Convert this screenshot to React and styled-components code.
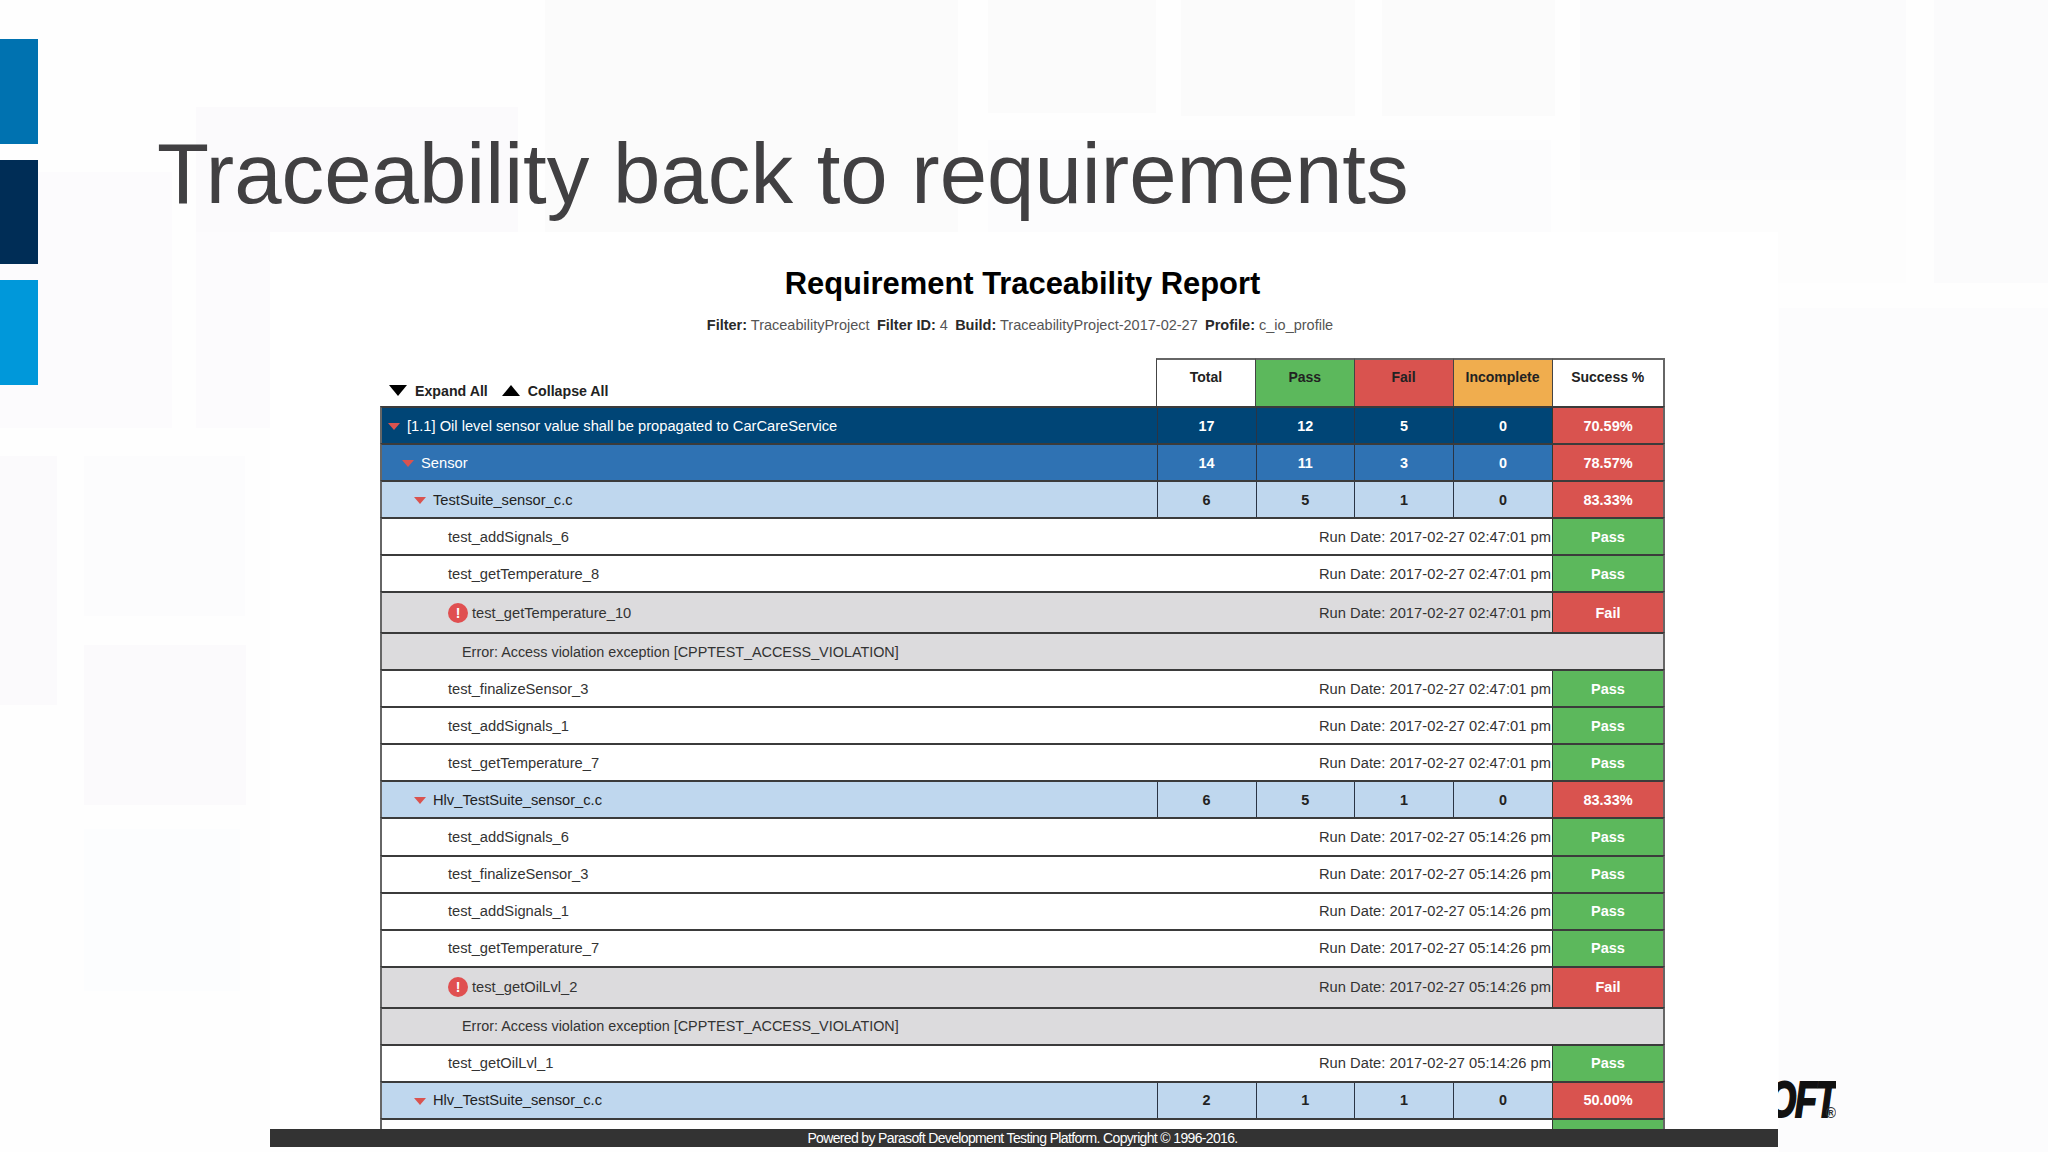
import React from "react";
import styled, { createGlobalStyle } from "styled-components";

const Global = createGlobalStyle`
  html, body { margin: 0; padding: 0; background: #fff; }
  * { box-sizing: border-box; }
  body { font-family: "Liberation Sans", Arial, sans-serif; }
`;

const Slide = styled.div`
  position: relative;
  width: 2048px;
  height: 1152px;
  overflow: hidden;
  background: #fefefe;
  display: flex;
  align-items: flex-start;
`;

const Watermark = styled.svg`
  position: absolute;
  inset: 0;
`;

const Accents = styled.div`
  position: relative;
  flex: none;
  width: 38px;
  padding-top: 39px;
  display: flex;
  flex-direction: column;
  gap: 16px;
`;

const Accent = styled.div`
  height: ${(p) => p.$h}px;
  background: ${(p) => p.$c};
`;

const Main = styled.div`
  position: relative;
  flex: none;
  width: 1740px;
  height: 1147px;
  display: flex;
  flex-direction: column;
`;

const Title = styled.h1`
  flex: none;
  height: 232px;
  margin: 0;
  padding: 125px 0 0 119px;
  font-size: 85.2px;
  line-height: 98px;
  font-weight: 400;
  color: #414042;
  white-space: nowrap;
`;

const Panel = styled.section`
  flex: 1;
  min-height: 0;
  margin-left: 232px;
  width: 1508px;
  background: #fff;
  display: flex;
  flex-direction: column;
`;

const ReportTitle = styled.h2`
  flex: none;
  margin: 0;
  padding: 33px 3px 0 0;
  text-align: center;
  font-size: 30.9px;
  line-height: 38px;
  font-weight: 700;
  color: #000;
`;

const FilterLine = styled.div`
  flex: none;
  margin-top: 12px;
  padding-right: 8px;
  text-align: center;
  font-size: 14.5px;
  line-height: 20px;
  color: #555;
  b { color: #2a2a2a; margin-left: 3.3px; }
  b:first-child { margin-left: 0; }
`;

const TableClip = styled.div`
  flex: 1;
  min-height: 0;
  overflow: hidden;
  padding: 23px 0 0 110px;
`;

const Table = styled.div`
  width: 1285px;
  display: flex;
  flex-direction: column;
`;

const HeadRow = styled.div`
  display: flex;
  height: 48px;
`;

const Controls = styled.div`
  flex: none;
  width: 776px;
  padding: 17px 0 0 9px;
  display: flex;
  align-items: center;
  height: 48px;
  font-size: 14.2px;
  font-weight: 700;
  color: #222;
`;

const Tri = styled.span`
  flex: none;
  width: 0;
  height: 0;
  border-left: 9.5px solid transparent;
  border-right: 9.5px solid transparent;
  ${(p) => (p.$up ? "border-bottom: 11px solid #000;" : "border-top: 11px solid #000;")}
  margin-right: 8px;
`;

const ControlText = styled.span`
  margin-right: 14px;
`;

const HeadCell = styled.div`
  flex: none;
  width: ${(p) => p.$w}px;
  height: 48px;
  background: ${(p) => p.$bg};
  border-top: 2px solid #666;
  border-left: 1.5px solid #444;
  ${(p) => p.$last && "border-right: 2px solid #666;"}
  padding-top: 9px;
  text-align: center;
  font-size: 14px;
  line-height: 16px;
  font-weight: 700;
  color: #222;
`;

const Row = styled.div`
  display: flex;
  flex: none;
  height: ${(p) => p.$h}px;
  background: ${(p) => p.$bg};
  color: ${(p) => p.$fg};
  border-top: 2px solid #3b3b3b;
  border-left: 2px solid #666;
  border-right: 2px solid #666;
  font-size: 14.7px;
`;

const NameCell = styled.div`
  flex: 1;
  min-width: 0;
  display: flex;
  align-items: center;
  padding-left: ${(p) => p.$pad}px;
`;

const ErrorText = styled(NameCell)`
  font-size: 14.38px;
`;

const Caret = styled.span`
  flex: none;
  width: 0;
  height: 0;
  border-left: 6px solid transparent;
  border-right: 6px solid transparent;
  border-top: 7px solid #d9534f;
  margin: 2px 7px 0 0;
`;

const ErrorIcon = styled.span`
  flex: none;
  width: 20px;
  height: 20px;
  border-radius: 50%;
  background: #e04f50;
  color: #fff;
  font-size: 14px;
  font-weight: 700;
  line-height: 20px;
  text-align: center;
  margin-right: 4px;
`;

const RunDate = styled.div`
  flex: none;
  align-self: center;
  text-align: right;
  padding-right: 1px;
  white-space: nowrap;
  letter-spacing: 0.03px;
`;

const NumCell = styled.div`
  flex: none;
  width: ${(p) => p.$w}px;
  display: flex;
  align-items: center;
  justify-content: center;
  border-left: 1.5px solid #2a3444;
  font-weight: 700;
  font-size: 14.4px;
`;

const StatusCell = styled.div`
  flex: none;
  width: 111px;
  display: flex;
  align-items: center;
  justify-content: center;
  background: ${(p) => p.$bg};
  border-left: 1.5px solid #2f3a30;
  color: #fff;
  font-weight: 700;
  font-size: 14.5px;
`;

const Footer = styled.footer`
  flex: none;
  height: 18px;
  background: #333;
  color: #fff;
  font-size: 14px;
  line-height: 18px;
  text-align: center;
  letter-spacing: -0.65px;
  padding-right: 3px;
`;

const LogoClip = styled.div`
  position: absolute;
  left: 1778px;
  top: 1078px;
  width: 58px;
  height: 44px;
  overflow: hidden;
  display: flex;
  justify-content: flex-end;
  align-items: flex-start;
`;

const LogoText = styled.span`
  flex: none;
  font-size: 50px;
  line-height: 44px;
  font-weight: 700;
  font-style: italic;
  letter-spacing: -2px;
  color: #111;
  -webkit-text-stroke: 2px #111;
  transform: scaleX(0.72);
  transform-origin: right top;
`;

const LogoMark = styled.span`
  position: absolute;
  right: 0;
  bottom: 3px;
  font-size: 14px;
  line-height: 12px;
  color: #333;
  font-weight: 700;
`;

const GREEN = "#5cb85c";
const RED = "#d9534f";
const H = 37.05;
const COLS = [99, 98.5, 99, 99];

const LEVELS = {
  req: { bg: "#004576", fg: "#fff", pad: 6 },
  group: { bg: "#2f72b3", fg: "#fff", pad: 20 },
  suite: { bg: "#bfd7ee", fg: "#222", pad: 32 },
};

const summary = (level, name, total, pass, fail, inc, pct) => ({ level, name, nums: [total, pass, fail, inc], pct });
const leaf = (name, date, fail) => ({ name, date, fail });
const D1 = "2017-02-27 02:47:01 pm";
const D2 = "2017-02-27 05:14:26 pm";
const ERR = "Error: Access violation exception [CPPTEST_ACCESS_VIOLATION]";

const rows = [
  summary("req", "[1.1] Oil level sensor value shall be propagated to CarCareService", 17, 12, 5, 0, "70.59%"),
  summary("group", "Sensor", 14, 11, 3, 0, "78.57%"),
  summary("suite", "TestSuite_sensor_c.c", 6, 5, 1, 0, "83.33%"),
  leaf("test_addSignals_6", D1),
  leaf("test_getTemperature_8", D1),
  leaf("test_getTemperature_10", D1, true),
  { error: ERR },
  leaf("test_finalizeSensor_3", D1),
  leaf("test_addSignals_1", D1),
  leaf("test_getTemperature_7", D1),
  summary("suite", "Hlv_TestSuite_sensor_c.c", 6, 5, 1, 0, "83.33%"),
  leaf("test_addSignals_6", D2),
  leaf("test_finalizeSensor_3", D2),
  leaf("test_addSignals_1", D2),
  leaf("test_getTemperature_7", D2),
  leaf("test_getOilLvl_2", D2, true),
  { error: ERR },
  leaf("test_getOilLvl_1", D2),
  summary("suite", "Hlv_TestSuite_sensor_c.c", 2, 1, 1, 0, "50.00%"),
  { blank: true },
];

const marks = [
  [545, 0, 413, 232, "#fbfbfb"], [196, 107, 322, 125, "#fbfafc"], [0, 172, 172, 256, "#fcfbfd"],
  [196, 232, 74, 196, "#fcfbfd"], [988, 0, 168, 113, "#fbfbfb"], [1181, 0, 174, 116, "#fbfbfb"],
  [1382, 0, 173, 116, "#fbfbfb"], [1580, 0, 326, 180, "#fbfbfc"], [1580, 180, 326, 103, "#fdfdfd"],
  [1934, 0, 114, 283, "#fbfbfc"], [988, 140, 563, 92, "#fcfcfd"], [1779, 308, 269, 844, "#fcfcfd"],
  [0, 456, 57, 249, "#fbfafc"], [84, 456, 161, 160, "#fcfcfd"], [84, 645, 162, 160, "#fbfafc"], [84, 829, 156, 162, "#fcfdfe"],
];

function ReportRow({ row }) {
  if (row.blank) {
    return (
      <Row $h={H} $bg="#fff" $fg="#333">
        <NameCell $pad={0} />
        <StatusCell $bg={GREEN} />
      </Row>
    );
  }
  if (row.error) {
    return (
      <Row $h={H} $bg="#dcdbdd" $fg="#333">
        <ErrorText $pad={80}>{row.error}</ErrorText>
      </Row>
    );
  }
  if (row.level) {
    const l = LEVELS[row.level];
    return (
      <Row $h={H} $bg={l.bg} $fg={l.fg}>
        <NameCell $pad={l.pad}><Caret />{row.name}</NameCell>
        {row.nums.map((n, i) => <NumCell key={i} $w={COLS[i]}>{n}</NumCell>)}
        <StatusCell $bg={RED}>{row.pct}</StatusCell>
      </Row>
    );
  }
  return (
    <Row $h={row.fail ? 41 : H} $bg={row.fail ? "#dcdbdd" : "#fff"} $fg="#333">
      <NameCell $pad={66}>
        {row.fail && <ErrorIcon>!</ErrorIcon>}
        {row.name}
      </NameCell>
      <RunDate>Run Date: {row.date}</RunDate>
      <StatusCell $bg={row.fail ? RED : GREEN}>{row.fail ? "Fail" : "Pass"}</StatusCell>
    </Row>
  );
}

export default function App() {
  return (
    <>
      <Global />
      <Slide>
        <Watermark width="2048" height="1152" viewBox="0 0 2048 1152">
          {marks.map(([x, y, w, h, c], i) => <rect key={i} x={x} y={y} width={w} height={h} fill={c} />)}
        </Watermark>
        <Accents>
          <Accent $h={105} $c="#0072b0" />
          <Accent $h={104} $c="#002d56" />
          <Accent $h={105} $c="#0098da" />
        </Accents>
        <Main>
          <Title>Traceability back to requirements</Title>
          <Panel>
            <ReportTitle>Requirement Traceability Report</ReportTitle>
            <FilterLine>
              <b>Filter:</b> TraceabilityProject <b>Filter ID:</b> 4 <b>Build:</b> TraceabilityProject-2017-02-27 <b>Profile:</b> c_io_profile
            </FilterLine>
            <TableClip>
              <Table>
                <HeadRow>
                  <Controls>
                    <Tri /><ControlText>Expand All</ControlText>
                    <Tri $up /><ControlText>Collapse All</ControlText>
                  </Controls>
                  <HeadCell $w={99} $bg="#fff">Total</HeadCell>
                  <HeadCell $w={98.5} $bg="#5cb85c">Pass</HeadCell>
                  <HeadCell $w={99} $bg="#d9534f">Fail</HeadCell>
                  <HeadCell $w={99} $bg="#f0ad4e">Incomplete</HeadCell>
                  <HeadCell $w={113.5} $bg="#fff" $last>Success %</HeadCell>
                </HeadRow>
                {rows.map((r, i) => <ReportRow key={i} row={r} />)}
              </Table>
            </TableClip>
            <Footer>Powered by Parasoft Development Testing Platform. Copyright © 1996-2016.</Footer>
          </Panel>
        </Main>
        <LogoClip>
          <LogoText>OFT</LogoText>
          <LogoMark>®</LogoMark>
        </LogoClip>
      </Slide>
    </>
  );
}
